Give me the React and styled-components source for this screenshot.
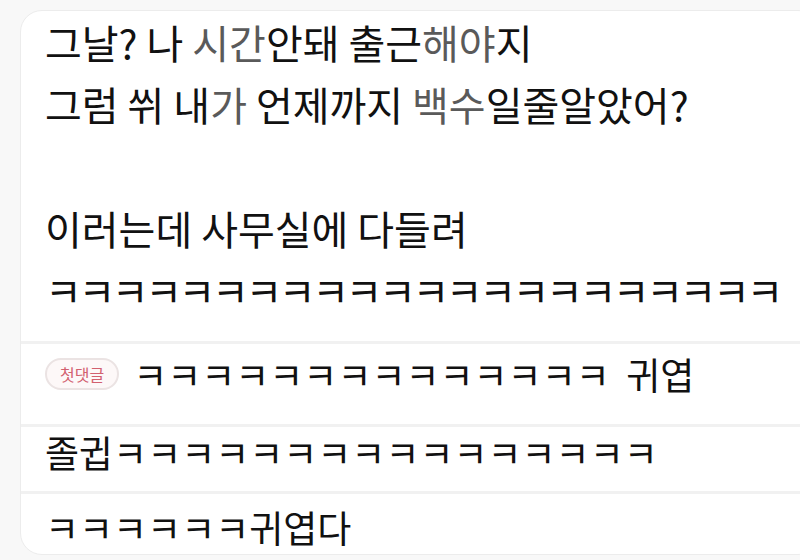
import React from 'react';
import styled, { createGlobalStyle } from 'styled-components';

const GlobalStyle = createGlobalStyle`
  html, body {
    margin: 0;
    padding: 0;
    background: #f8f8f8;
  }
  body {
    font-family: 'Noto Sans CJK KR', 'Noto Sans', sans-serif;
  }
`;

const Page = styled.div`
  width: 800px;
  height: 560px;
  overflow: hidden;
  padding: 10px 0 0 20px;
  box-sizing: border-box;
`;

const Card = styled.div`
  width: 800px;
  height: 545px;
  background: #ffffff;
  border: 1px solid #ececec;
  border-radius: 22px;
  box-sizing: border-box;
  display: flex;
  flex-direction: column;
`;

const Post = styled.div`
  padding: 0 0 20px 24px;
`;

const Line = styled.div`
  height: 62px;
  line-height: 62px;
  font-size: 40px;
  color: #111111;
  white-space: nowrap;
`;

const Faint = styled.span`
  color: #5a5a5a;
`;

// ㅋ runs are narrower than the surrounding syllables in the screenshot
const Laugh = styled.span`
  letter-spacing: ${(p) => p.$spacing};
`;

const Comment = styled.div`
  border-top: 3px solid #f1f1f1;
  padding: ${(p) => p.$pad};
  padding-left: 24px;
  display: flex;
  align-items: center;
  gap: 14px;
  height: 44px;
  font-size: 37px;
  line-height: 44px;
  color: #111111;
  white-space: nowrap;
`;

const Badge = styled.span`
  display: inline-flex;
  align-items: center;
  justify-content: center;
  height: 28px;
  padding: 0 13px;
  border: 2px solid #ebe3e3;
  border-radius: 16px;
  background: #fdf8f8;
  color: #d2606f;
  font-size: 16px;
  line-height: 1;
`;

const k = (n) => 'ㅋ'.repeat(n);

export default function App() {
  return (
    <Page>
      <GlobalStyle />
      <Card>
        <Post>
          <Line>
            그날? 나 <Faint>시간</Faint>안돼 출근<Faint>해야</Faint>지
          </Line>
          <Line>
            그럼 쒸 내<Faint>가</Faint> 언제까지 <Faint>백수</Faint>일줄알았어?
          </Line>
          <Line />
          <Line>이러는데 사무실에 다들려</Line>
          <Line>
            <Laugh $spacing="-3.4px">{k(22)}</Laugh>
          </Line>
        </Post>
        <Comment $pad="8px 0 28px">
          <Badge>첫댓글</Badge>
          <span>
            {k(14)}&nbsp; 귀엽
          </span>
        </Comment>
        <Comment $pad="3px 0 17px">졸귑{k(16)}</Comment>
        <Comment $pad="11px 0 0">{k(6)}귀엽다</Comment>
      </Card>
    </Page>
  );
}
